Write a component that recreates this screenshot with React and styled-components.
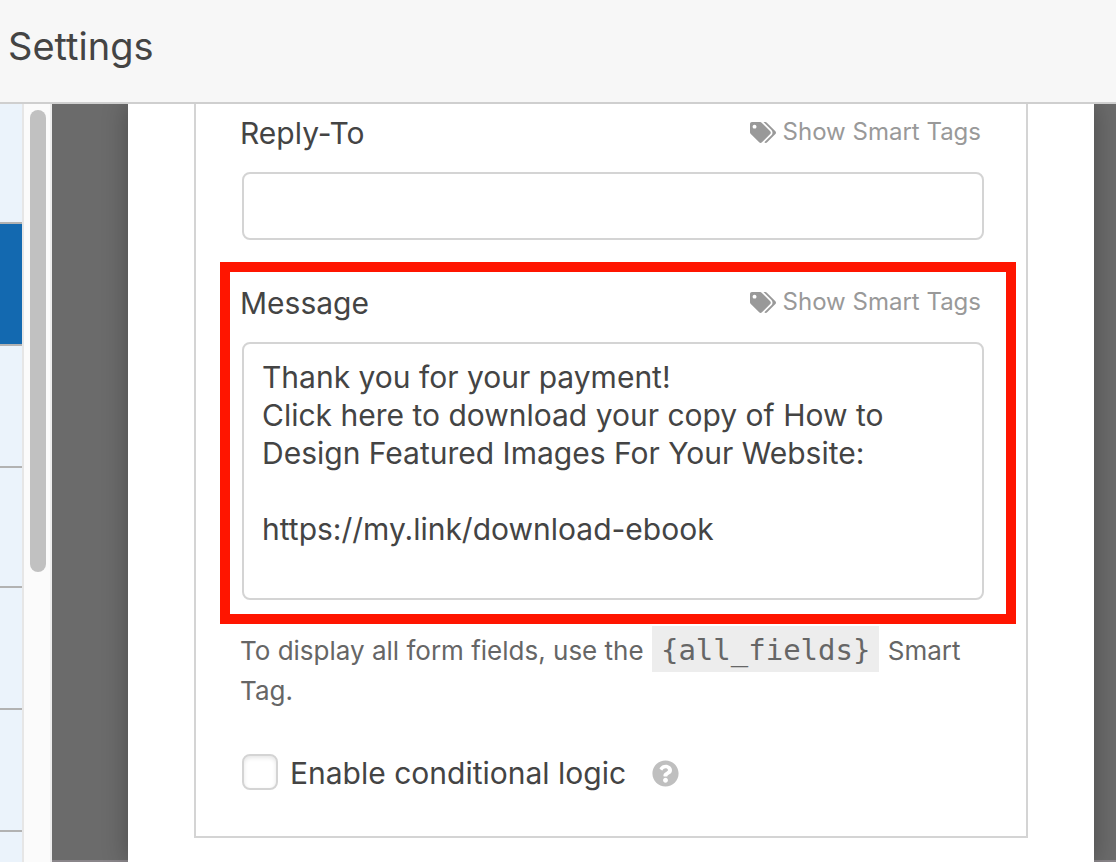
import React from 'react';
import styled, { createGlobalStyle } from 'styled-components';
import { FaTags, FaQuestionCircle } from 'react-icons/fa';

const GlobalStyle = createGlobalStyle`
  *, *::before, *::after { box-sizing: border-box; }
  body {
    margin: 0;
    background: #fff;
    color: #444;
    font-family: Inter, "Liberation Sans", sans-serif;
  }
`;

const Page = styled.div`
  display: flex;
  flex-direction: column;
  min-height: 100vh;
`;

const Header = styled.header`
  position: relative;
  z-index: 2;
  padding: 23px 8px 33px;
  background: #f7f7f7;
  border-bottom: 2px solid #cfcfcf;
`;

const Title = styled.h1`
  margin: 0;
  font-size: 38px;
  line-height: 46px;
  font-weight: 400;
`;

const Body = styled.div`
  display: flex;
  flex: 1;
`;

const Sidebar = styled.div`
  width: 24px;
  background: #ebf3fb;
  border-right: 2px solid #e6e6e6;
`;

const SidebarItem = styled.div`
  height: ${(p) => (p.$short ? 120 : 122)}px;
  background: ${(p) => (p.$active ? '#1369b0' : '#ebf3fb')};
  border-bottom: 2px solid #b2b2b2;
`;

const ScrollTrack = styled.div`
  width: 28px;
  padding: 6px 4px 0 6px;
  background: #fbfbfb;
  border-right: 2px solid #ededed;
`;

const ScrollThumb = styled.div`
  width: 16px;
  height: 462px;
  border-radius: 8px;
  background: #c1c1c1;
`;

const Backdrop = styled.div`
  display: flex;
  flex: 1;
  min-width: 0;
  padding: 0 22px 0 76px;
  background: #6b6b6b;
  border-bottom: 2px solid #8a868a;
`;

const Dialog = styled.main`
  flex: 1;
  min-width: 0;
  margin-bottom: -2px;
  padding: 0 66px 24px;
  background: #fff;
  box-shadow: 0 0 24px rgba(0, 0, 0, 0.3);
`;

const Panel = styled.section`
  padding: 9px 40px 44px 44px;
  border: 2px solid #d4d4d4;
  border-top: 0;
`;

const FieldHead = styled.div`
  display: flex;
  justify-content: space-between;
  align-items: flex-start;
  margin-bottom: 19px;
`;

const FieldLabel = styled.label`
  font-size: 30px;
  line-height: 40px;
`;

const TagsButton = styled.button`
  display: flex;
  align-items: center;
  gap: 7px;
  padding: 0 5px 0 0;
  border: 0;
  background: none;
  color: #999;
  font: inherit;
  font-size: 24px;
  line-height: 38px;
  cursor: pointer;
`;

const TagsIcon = styled(FaTags)`
  width: 26px;
  height: 21px;
`;

const fieldBox = `
  display: block;
  width: calc(100% - 4px);
  margin: 0 2px;
  padding: 14px 18px;
  border: 2px solid #d4d4d4;
  border-radius: 8px;
  background: #fff;
  color: #444;
  font: inherit;
  font-size: 30px;
  line-height: 38px;
  outline: none;
`;

const TextInput = styled.input`
  ${fieldBox}
  height: 68px;
`;

const TextArea = styled.textarea`
  ${fieldBox}
  height: 258px;
  resize: none;
  overflow: hidden;
`;

const Highlight = styled.div`
  margin: 22px -30px 0 -20px;
  padding: 11px 20px 14px 10px;
  border: 10px solid #ff1500;
`;

const Hint = styled.p`
  margin: 7px 0 43px;
  color: #666;
  font-size: 26px;
  line-height: 40px;
`;

const Code = styled.code`
  margin: 0 1px;
  padding: 7px 9px 5px;
  background: #ededed;
  font-family: "DejaVu Sans Mono", monospace;
  font-size: 29px;
  line-height: 1;
`;

const CheckRow = styled.div`
  display: flex;
  align-items: flex-start;
`;

const Checkbox = styled.input`
  appearance: none;
  width: 36px;
  height: 36px;
  margin: 0 12px 0 2px;
  border: 2px solid #d4d4d4;
  border-radius: 8px;
  background: #fff;
  box-shadow: inset 0 2px 4px rgba(0, 0, 0, 0.1);
`;

const CheckLabel = styled.label`
  font-size: 30px;
  line-height: 38px;
`;

const HelpButton = styled.button`
  display: flex;
  align-items: center;
  height: 38px;
  margin-left: 26px;
  padding: 0;
  border: 0;
  background: none;
  color: #bfbfbf;
  font-size: 27px;
`;

const sidebarItems = [
  { short: true },
  { active: true },
  {},
  { short: true },
  {},
  {},
];

const message = `Thank you for your payment!
Click here to download your copy of How to Design Featured Images For Your Website:

https://my.link/download-ebook`;

function Field({ id, label, children }) {
  return (
    <div>
      <FieldHead>
        <FieldLabel htmlFor={id}>{label}</FieldLabel>
        <TagsButton type="button">
          <TagsIcon aria-hidden="true" />
          Show Smart Tags
        </TagsButton>
      </FieldHead>
      {children}
    </div>
  );
}

export default function App() {
  return (
    <Page>
      <GlobalStyle />
      <Header>
        <Title>Settings</Title>
      </Header>
      <Body>
        <Sidebar aria-hidden="true">
          {sidebarItems.map((item, i) => (
            <SidebarItem key={i} $active={item.active} $short={item.short} />
          ))}
        </Sidebar>
        <ScrollTrack aria-hidden="true">
          <ScrollThumb />
        </ScrollTrack>
        <Backdrop>
          <Dialog>
            <Panel>
              <Field id="reply-to" label="Reply-To">
                <TextInput id="reply-to" type="text" />
              </Field>
              <Highlight>
                <Field id="message" label="Message">
                  <TextArea id="message" defaultValue={message} spellCheck={false} />
                </Field>
              </Highlight>
              <Hint>
                To display all form fields, use the <Code>{'{all_fields}'}</Code> Smart Tag.
              </Hint>
              <CheckRow>
                <Checkbox id="conditional" type="checkbox" />
                <CheckLabel htmlFor="conditional">Enable conditional logic</CheckLabel>
                <HelpButton type="button" aria-label="Help">
                  <FaQuestionCircle aria-hidden="true" />
                </HelpButton>
              </CheckRow>
            </Panel>
          </Dialog>
        </Backdrop>
      </Body>
    </Page>
  );
}
